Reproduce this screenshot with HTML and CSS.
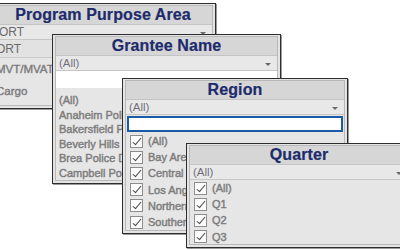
FILE: index.html
```html
<!DOCTYPE html>
<html>
<head>
<meta charset="utf-8">
<link rel="stylesheet" href="styles.css">
</head>
<body>
<div class="desk">
  <section class="win w1">
    <div class="inner">
      <div class="head">Program Purpose Area</div>
      <div class="drop"><span class="cut">ORT</span><span class="arrow"></span></div>
      <div class="row1 sel"><span class="cut">ORT</span></div>
      <div class="row1 tall"><span class="cut">MVT/MVAT</span></div>
      <div class="row1 tall"><span class="cut">Cargo</span></div>
    </div>
  </section>

  <section class="win w2">
    <div class="inner">
      <div class="head">Grantee Name</div>
      <div class="drop"><span class="all">(All)</span><span class="arrow"></span></div>
      <div class="search"></div>
      <ul class="plain">
        <li>(All)</li>
        <li>Anaheim Police Department</li>
        <li>Bakersfield Police Department</li>
        <li>Beverly Hills Police Department</li>
        <li>Brea Police Department</li>
        <li>Campbell Police Department</li>
      </ul>
    </div>
  </section>

  <section class="win w3">
    <div class="inner">
      <div class="head">Region</div>
      <div class="drop"><span class="all">(All)</span><span class="arrow"></span></div>
      <div class="search blue"></div>
      <ul class="checks">
        <li><span class="cb"></span>(All)</li>
        <li><span class="cb"></span>Bay Area</li>
        <li><span class="cb"></span>Central</li>
        <li><span class="cb"></span>Los Angeles</li>
        <li><span class="cb"></span>Northern</li>
        <li><span class="cb"></span>Southern</li>
      </ul>
    </div>
  </section>

  <section class="win w4">
    <div class="inner">
      <div class="head">Quarter</div>
      <div class="drop"><span class="all">(All)</span><span class="arrow"></span></div>
      <ul class="checks">
        <li><span class="cb"></span>(All)</li>
        <li><span class="cb"></span>Q1</li>
        <li><span class="cb"></span>Q2</li>
        <li><span class="cb"></span>Q3</li>
      </ul>
    </div>
  </section>
</div>
</body>
</html>
```

FILE: styles.css
```css
* { box-sizing: border-box; }
html, body { margin: 0; padding: 0; background: #ffffff; }
body {
  width: 400px;
  height: 250px;
  overflow: hidden;
  font-family: "Liberation Sans", Arial, sans-serif;
}
.desk { position: relative; width: 400px; height: 250px; }

.win {
  position: absolute;
  background: #e4e4e4;
  border: 1px solid #2e2e2e;
  padding: 1px 2px 2px 2px;
  overflow: hidden;
  box-shadow: 1px 1px 0 #9a9a9a;
}
.inner {
  height: 100%;
  border: 1px solid #b9b9b9;
  background: #e6e6e6;
  display: flex;
  flex-direction: column;
  overflow: hidden;
}
.w1 { left: -10px; top: 3px; width: 226px; height: 106px; }
.w2 { left: 52px; top: 34px; width: 229px; height: 150px; }
.w3 { left: 122px; top: 78px; width: 226px; height: 156px; }
.w4 { left: 186px; top: 143px; width: 226px; height: 105px; }

.head {
  flex: none;
  height: 19px;
  background: #d6d6d6;
  color: #1d2b6c;
  font-weight: bold;
  font-size: 16px;
  line-height: 18px;
  text-align: center;
  border-bottom: 1px solid #c4c4c4;
  letter-spacing: 0.1px;
  -webkit-text-stroke: 0.2px #1d2b6c;
}
.drop {
  flex: none;
  height: 15px;
  display: flex;
  align-items: center;
  justify-content: space-between;
  background: #e8e8e8;
  border-bottom: 1px solid #c6c6c6;
  padding: 0 6px 0 3px;
  font-size: 11.5px;
  color: #707070;
}
.arrow {
  width: 0; height: 0;
  border-left: 3px solid transparent;
  border-right: 3px solid transparent;
  border-top: 3px solid #6a6a6a;
  margin-top: 2px;
}
.all { color: #70707c; }
.cut { margin-left: 2px; }
.w1 .drop { font-size: 12px; color: #6a6a6a; }

.row1 {
  flex: none;
  height: 18px;
  display: flex;
  align-items: center;
  padding-left: 3px;
  font-size: 11.5px;
  color: #7c7c7c;
  -webkit-text-stroke: 0.4px #7c7c7c;
}
.row1.sel { border-bottom: 1px solid #c9c9c9; background: #e2e2e2; color: #6a6a6a; -webkit-text-stroke: 0; font-size: 12px; }
.row1.tall { height: 22px; }
.row1 .cut { margin-left: -1px; }

.search {
  flex: none;
  height: 17px;
  background: #ffffff;
}
.search.blue {
  height: 16px;
  margin: 1px 1px 1px 1px;
  border: 2px solid #1a5aa6;
}

ul { list-style: none; margin: 0; padding: 0; }
.plain { padding-top: 5px; padding-left: 3px; }
.plain li {
  height: 14.6px;
  line-height: 14.6px;
  font-size: 11px;
  color: #7e7e7e;
  -webkit-text-stroke: 0.45px #7e7e7e;
  white-space: nowrap;
}

.checks { padding-top: 0; padding-left: 4px; }
.checks li {
  height: 16.2px;
  display: flex;
  align-items: center;
  gap: 5px;
  font-size: 11px;
  color: #7e7e7e;
  -webkit-text-stroke: 0.45px #7e7e7e;
  white-space: nowrap;
}
.cb {
  position: relative;
  flex: none;
  width: 13px;
  height: 13px;
  background: #fbfbfb;
  border: 1px solid #8d8d8d;
  -webkit-text-stroke: 0;
}
.cb::after {
  content: "";
  position: absolute;
  left: 4px;
  top: 0px;
  width: 3px;
  height: 8px;
  border-right: 1px solid #4a4a4a;
  border-bottom: 1px solid #4a4a4a;
  transform: rotate(40deg);
}
```
